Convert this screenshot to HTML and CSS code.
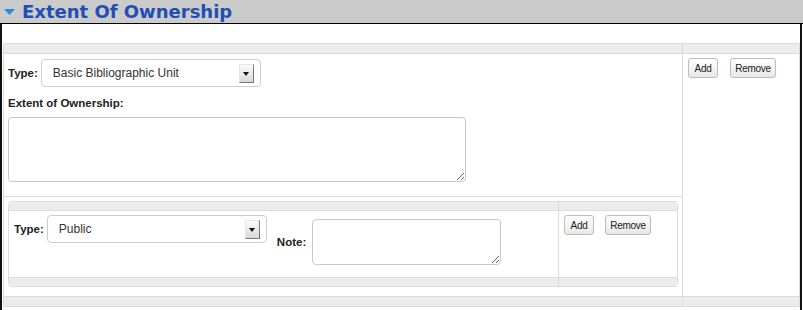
FILE: index.html
```html
<!DOCTYPE html>
<html lang="en">

<head>
    <meta charset="UTF-8">
    <title>Extent Of Ownership</title>
    <link rel="stylesheet" href="styles.css">
</head>

<body>
    <!-- 区块 -->
    <div class="section">
        <h2 class="section-title">
            <svg class="caret" width="11" height="6" viewBox="0 0 11 6"><polygon points="0,0 11,0 5.5,6" fill="#2590d8"/></svg>Extent Of Ownership
        </h2>
        <div class="section-body">
            <div class="grid outer">
                <div class="grid-head col-main"></div>
                <div class="grid-head col-side"></div>

                <div class="grid-cell col-main">
                    <div class="fields">
                        <div class="field-line">
                            <label>Type:</label>
                            <div class="select">Basic Bibliographic Unit<span class="select-btn"></span></div>
                        </div>
                        <label class="block-label">Extent of Ownership:</label>
                        <textarea class="extent"></textarea>
                    </div>

                    <!-- 嵌套表格 -->
                    <div class="grid nested">
                        <div class="grid-head col-main"></div>
                        <div class="grid-head col-side"></div>

                        <div class="grid-cell col-main">
                            <div class="inline-fields">
                                <div class="field-line">
                                    <label>Type:</label>
                                    <div class="select">Public<span class="select-btn"></span></div>
                                </div>
                                <div class="field-line note">
                                    <label>Note:</label>
                                    <textarea class="note-text"></textarea>
                                </div>
                            </div>
                        </div>
                        <div class="grid-cell col-side actions">
                            <button class="btn btn-add">Add</button>
                            <button class="btn btn-remove">Remove</button>
                        </div>

                        <div class="grid-foot col-main"></div>
                        <div class="grid-foot col-side"></div>
                    </div>
                </div>
                <div class="grid-cell col-side actions">
                    <button class="btn btn-add">Add</button>
                    <button class="btn btn-remove">Remove</button>
                </div>

                <div class="grid-foot col-main"></div>
                <div class="grid-foot col-side"></div>
            </div>
        </div>
    </div>
</body>

</html>
```

FILE: styles.css
```css
/*清除默认边距*/
* {
    margin: 0;
    padding: 0;
    box-sizing: border-box;
}

body {
    font-family: "Liberation Sans", Arial, sans-serif;
    color: #222;
    background: #fff;
}

.section {
    width: 803px;
}

/*标题栏*/
.section-title {
    height: 24px;
    line-height: 23px;
    padding-left: 4px;
    background-color: #cbcbcb;
    border-bottom: 1px solid #000;
    font-family: "DejaVu Sans", Verdana, sans-serif;
    font-size: 18px;
    font-weight: bold;
    color: #1f4fb4;
    white-space: nowrap;
}

.caret {
    display: inline-block;
    margin-right: 7px;
    vertical-align: 3px;
}

.section-body {
    width: 802px;
    padding: 19px 0 4px 1px;
    border-left: 2px solid #111;
    border-right: 2px solid #111;
}

/*表格*/
.grid {
    display: grid;
    border: 1px solid #dcdcdc;
}

.outer {
    grid-template-columns: 679px 1fr;
}

.nested {
    grid-template-columns: 550px 1fr;
    margin: 4px 4px 9px;
    border-radius: 4px;
    overflow: hidden;
}

.grid-head,
.grid-foot {
    height: 10px;
    background-color: #ececec;
}

.grid-head {
    border-bottom: 1px solid #dcdcdc;
}

.grid-foot {
    border-top: 1px solid #dcdcdc;
}

.nested .grid-head,
.nested .grid-foot {
    height: 9px;
}

.col-main {
    border-right: 1px solid #dcdcdc;
}

.fields {
    padding: 5px 4px 14px;
    border-bottom: 1px solid #dcdcdc;
}

.field-line {
    display: flex;
    align-items: center;
    gap: 3px;
}

label {
    font-size: 11.5px;
    font-weight: bold;
    color: #222;
}

.block-label {
    display: block;
    height: 14px;
    line-height: 14px;
    margin: 9px 0 7px;
}

/*下拉框*/
.select {
    display: flex;
    align-items: center;
    justify-content: space-between;
    width: 220px;
    height: 28px;
    padding: 0 6px 0 11px;
    border: 1px solid #ccc;
    border-radius: 4px;
    font-size: 12px;
    color: #333;
}

.select-btn {
    position: relative;
    width: 15px;
    height: 19px;
    background: linear-gradient(#fafafa, #d9d9d9);
    border: 1px solid #e6e6e6;
    border-right-color: #7a7a7a;
    border-bottom-color: #7a7a7a;
}

.select-btn:after {
    content: "";
    position: absolute;
    left: 3px;
    top: 7px;
    border-left: 3.5px solid transparent;
    border-right: 3.5px solid transparent;
    border-top: 4px solid #111;
}

textarea {
    display: block;
    border: 1px solid #c8c8c8;
    border-radius: 4px;
    font-family: inherit;
    background: #fff;
}

.extent {
    width: 458px;
    height: 65px;
}

.inline-fields {
    display: flex;
    align-items: flex-start;
    padding: 4px 5px 12px;
}

.note {
    margin: 4px 0 0 10px;
    gap: 6px;
}

.note-text {
    width: 189px;
    height: 46px;
}

/*按钮*/
.actions {
    display: flex;
    align-items: flex-start;
    gap: 11px;
    padding: 4px 5px;
}

.outer > .actions {
    gap: 12px;
}

.btn {
    height: 20px;
    border: 1px solid #bcbcbc;
    border-radius: 3px;
    background: linear-gradient(#fff, #e8e8e8);
    font-family: inherit;
    font-size: 10px;
    letter-spacing: -0.3px;
    color: #222;
    cursor: pointer;
}

.btn-add {
    width: 30px;
}

.btn-remove {
    width: 46px;
}
```
